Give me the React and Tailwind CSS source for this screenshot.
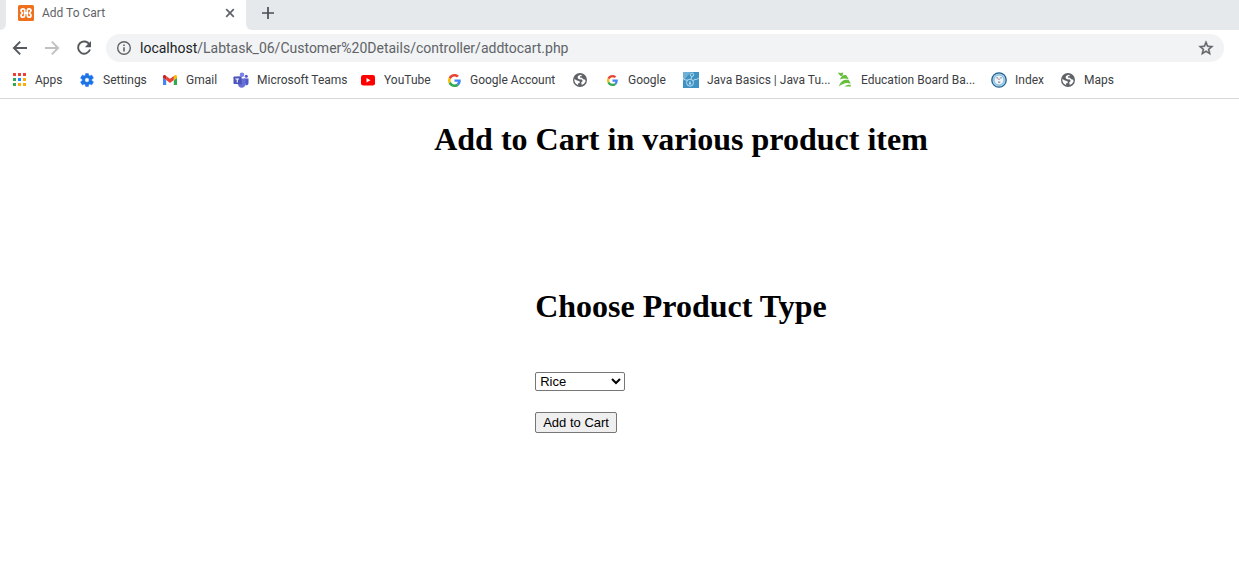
import React from 'react';

const GlobeIcon = () => (
  <svg viewBox="0 0 16 16" className="size-4" aria-hidden="true">
    <circle cx="8" cy="8" r="7" fill="#5f6368" />
    <path d="M8.600 2.700 6 4.100 5.600 6 7 7.200l2.800.3.900 1.600-1.500 1.400.5 2.400 2.300-1.100 1.500-2.300-.2-1.800-2-.4-1.400-1.600-2-.3.200-1.200 2.300-.3z" fill="#fff" />
    <path d="M2.400 6.900 5 8.400l2.500.9.300 1.700-1.900.6.300 1.600-2.600-1.600L2.400 9z" fill="#fff" />
  </svg>
);

const GoogleIcon = ({ className = 'size-[13px]' }) => (
  <svg viewBox="0 0 48 48" className={className} aria-hidden="true">
    <path fill="#EA4335" d="M24 9.500c3.500 0 6.700 1.200 9.200 3.600l6.900-6.900C35.900 2.400 30.500 0 24 0 14.600 0 6.500 5.400 2.600 13.200l8 6.200C12.400 13.700 17.700 9.500 24 9.500z" />
    <path fill="#4285F4" d="M47 24.500c0-1.600-.2-3.100-.4-4.500H24v9h12.900c-.6 3-2.200 5.500-4.800 7.200l7.700 6C44.400 38 47 31.800 47 24.500z" />
    <path fill="#FBBC05" d="M10.500 28.600c-.5-1.500-.8-3-.8-4.600s.3-3.100.8-4.600l-8-6.200C.9 16.500 0 20.100 0 24s.9 7.500 2.600 10.800z" />
    <path fill="#34A853" d="M24 48c6.500 0 11.900-2.100 15.900-5.800l-7.700-6c-2.200 1.500-4.900 2.300-8.200 2.300-6.300 0-11.600-4.200-13.500-9.900l-8 6.200C6.500 42.600 14.600 48 24 48z" />
  </svg>
);

const AppsIcon = () => (
  <svg viewBox="0 0 16 16" className="size-4" shapeRendering="crispEdges" aria-hidden="true">
    <path fill="#ea4335" d="M2 1h3v3H2zM7 1h3v3H7zM12 1h3v3h-3z" />
    <path fill="#34a853" d="M2 6h3v3H2zM2 11h3v3H2z" />
    <path fill="#1a8cff" d="M7 6h3v3H7z" />
    <path fill="#fbae08" d="M12 6h3v3h-3zM7 11h3v3H7zM12 11h3v3h-3z" />
  </svg>
);

const SettingsIcon = () => (
  <svg viewBox="1 1 22 22" className="size-[14px]" aria-hidden="true">
    <path fill="#1a73e8" d="M19.400 13a7.500 7.500 0 0 0 0-2l2.500-1.700a.5.5 0 0 0 .1-.6l-2.300-4a.5.5 0 0 0-.6-.2l-2.800 1.200a7 7 0 0 0-1.700-1L14.200 2a.5.5 0 0 0-.5-.4h-3.400a.5.5 0 0 0-.5.4l-.4 2.700a7 7 0 0 0-1.700 1L4.900 4.500a.5.5 0 0 0-.6.2l-2.300 4a.5.5 0 0 0 .1.6L4.600 11a7.500 7.500 0 0 0 0 2l-2.500 1.700a.5.5 0 0 0-.1.6l2.300 4a.5.5 0 0 0 .6.2l2.800-1.200a7 7 0 0 0 1.700 1l.4 2.700c0 .2.2.4.5.4h3.400a.5.5 0 0 0 .5-.4l.4-2.700a7 7 0 0 0 1.700-1l2.800 1.200a.5.5 0 0 0 .6-.2l2.300-4a.5.5 0 0 0-.1-.6zM12 15.500a3.500 3.500 0 1 1 0-7 3.500 3.500 0 0 1 0 7z" stroke="#1a73e8" strokeWidth=".8" />
  </svg>
);

const GmailIcon = () => (
  <svg viewBox="52 42 88 66" className="w-[14px]" aria-hidden="true">
    <path fill="#4285f4" d="M58 108h14V74L52 59v43c0 3.300 2.700 6 6 6" />
    <path fill="#34a853" d="M120 108h14c3.300 0 6-2.700 6-6V59l-20 15" />
    <path fill="#fbbc04" d="M120 48v26l20-15v-8c0-7.400-8.500-11.600-14.400-7.200" />
    <path fill="#ea4335" d="M72 74V48l24 18 24-18v26L96 92" />
    <path fill="#c5221f" d="M52 51v8l20 15V48l-5.600-4.200C60.500 39.400 52 43.600 52 51" />
  </svg>
);

const TeamsIcon = () => (
  <svg viewBox="0 0 16 16" className="size-4" aria-hidden="true">
    <circle cx="13.300" cy="4.200" r="1.500" fill="#5059c9" />
    <path d="M11 6.500h4.500v4.300c0 2-1.500 2.800-3 2.500z" fill="#5059c9" />
    <circle cx="9" cy="2.700" r="2.300" fill="#7b83eb" />
    <path d="M5 6.500h7.500v5c0 2.600-1.600 4.300-3.800 4.300S5 14.200 5 11.500z" fill="#6870d8" />
    <path d="M4.500 4.500H9v8H4.500z" fill="#4049a8" opacity=".55" />
    <rect x="0.500" y="4.500" width="7.500" height="7.500" rx=".7" fill="#4b53bc" />
    <path d="M2.400 6.400h3.700v1.100H4.800v3.100H3.700V7.500H2.400z" fill="#fff" />
  </svg>
);

const YouTubeIcon = () => (
  <svg viewBox="0 0 16 16" className="size-4" aria-hidden="true">
    <rect x="1" y="3" width="14" height="10.500" rx="2.200" fill="#f00" />
    <path d="M6.500 6v4.500l4-2.250z" fill="#fff" />
  </svg>
);

const JavaIcon = () => (
  <svg viewBox="0 0 16 16" className="size-4" aria-hidden="true">
    <path fill="#3f93c4" d="M0 0h16v16H0z" />
    <path fill="#6fb0d4" d="M0 0h8L0 9z" />
    <g fill="none" stroke="#c3e1f0" strokeWidth=".9">
      <circle cx="9" cy="2.700" r="1.700" />
      <circle cx="7" cy="10.700" r="3.500" />
      <path d="M9 4.500 8 7M0 6l2 2h2.500M10 8.500l2-1h1.500L16 6" />
    </g>
    <path d="M7 8.600 8.300 12.400H5.700z" fill="#c3e1f0" />
  </svg>
);

const EducationIcon = () => (
  <svg viewBox="0 0 16 16" className="size-4" fill="#67bd3c" aria-hidden="true">
    <path d="M1 .5c2 .6 3.500.4 5.300.1L5.300 4.300C3.300 4.500 2 2.500 1 .5z" />
    <path d="M2.800 7.500C4.500 3.500 7.300 2.600 9.300 3.300l2.500 4C8.500 6 5.500 6.200 2.800 7.500z" />
    <path d="M2 14.500c1.500-6 6-7.300 9.800-6.500l2 3.700C9.500 10.300 5.500 11.500 2 14.500z" />
    <path d="M7.500 14.500c2-1.800 4-2 6-1.700l.5 1.700z" />
  </svg>
);

const IndexIcon = () => (
  <svg viewBox="0 0 16 16" className="size-4" aria-hidden="true">
    <circle cx="8" cy="8" r="7.200" fill="#a9d3ec" stroke="#27618f" strokeWidth="1.300" />
    <circle cx="8" cy="8" r="5" fill="#eef4f5" stroke="#7db9df" strokeWidth="1" />
    <path d="M5.500 5.200h1.300v1.200H5.500zM9.400 5.200h1.200v1.200H9.400z" fill="#5a7894" />
    <path d="M7.400 6.500h1.200V8H7.400z" fill="#b57583" />
    <path d="M7 9.600h2.200v1.200H7z" fill="#7d8790" />
  </svg>
);

const bookmarks = [
  { label: 'Apps', Icon: AppsIcon, width: 'w-[68px]' },
  { label: 'Settings', Icon: SettingsIcon, width: 'w-[83px]' },
  { label: 'Gmail', Icon: GmailIcon, width: 'w-[71px]' },
  { label: 'Microsoft Teams', Icon: TeamsIcon, width: 'w-[127px]' },
  { label: 'YouTube', Icon: YouTubeIcon, width: 'w-[86px]' },
  { label: 'Google Account', Icon: GoogleIcon, width: 'w-[126px]' },
  { label: '', name: 'Website', Icon: GlobeIcon, width: 'w-8' },
  { label: 'Google', Icon: () => <GoogleIcon className="size-[11px]" />, width: 'w-[79px]' },
  { label: 'Java Basics | Java Tu...', Icon: JavaIcon, width: 'w-[154px]' },
  { label: 'Education Board Ba...', Icon: EducationIcon, width: 'w-[154px]' },
  { label: 'Index', Icon: IndexIcon, width: 'w-[69px]' },
  { label: 'Maps', Icon: GlobeIcon, width: 'w-[69px]' },
];

function TabStrip() {
  return (
    <div className="flex h-[30px] items-stretch bg-[#e5e9ec]">
      <div className="w-1.5 bg-white">
        <div className="h-full rounded-br-md bg-[#e5e9ec]" />
      </div>
      <div className="flex w-60 items-center bg-white pr-2 pb-1 pl-3">
        <svg viewBox="0 0 16 16" className="size-4 shrink-0" aria-hidden="true">
          <rect width="16" height="16" rx="1.500" fill="#ee6f1c" />
          <g fill="none" stroke="#fff" strokeWidth="1.700" strokeLinejoin="round">
            <path d="M6.700 7V5.300C6.700 4.200 6 3.800 5 3.800S3 4.500 3 5.600 3.800 7.200 4.700 8C3.800 8.800 3 9.300 3 10.400s1 1.800 2 1.800 1.700-.4 1.700-1.500V9" />
            <path d="M9.300 7V5.300c0-1.100.7-1.500 1.700-1.500s2 .7 2 1.800-.8 1.600-1.700 2.400c.9.800 1.700 1.300 1.700 2.400s-1 1.800-2 1.800-1.700-.4-1.700-1.500V9" />
            <path d="M6 8h4" strokeWidth="2" />
          </g>
        </svg>
        <span className="ml-2 flex-1 text-xs text-[#5f6368]">Add To Cart</span>
        <button type="button" aria-label="Close tab" className="grid size-4 place-items-center">
          <svg viewBox="0 0 10 10" className="size-[10px]" aria-hidden="true">
            <path d="m1.200 1.200 7.600 7.600M8.800 1.200 1.200 8.800" stroke="#5f6368" strokeWidth="1.700" />
          </svg>
        </button>
      </div>
      <div className="flex flex-1 bg-white">
        <div className="flex flex-1 items-center rounded-bl-md bg-[#e5e9ec] pb-1 pl-[14px]">
          <button type="button" aria-label="New tab" className="grid size-4 place-items-center">
            <svg viewBox="0 0 12 12" className="size-3" aria-hidden="true">
              <path d="M6 0v12M0 6h12" stroke="#4a4e52" strokeWidth="1.700" />
            </svg>
          </button>
        </div>
      </div>
    </div>
  );
}

function Toolbar() {
  return (
    <div className="flex h-9 items-center gap-[14px] pr-[15px] pl-3">
      <div className="flex gap-4">
        <button type="button" aria-label="Back">
          <svg viewBox="0 0 16 16" className="size-4" aria-hidden="true">
            <path d="M15 8H2.200M8.200 1.700 1.900 8l6.300 6.300" fill="none" stroke="#55595d" strokeWidth="1.900" />
          </svg>
        </button>
        <button type="button" aria-label="Forward">
          <svg viewBox="0 0 16 16" className="size-4" aria-hidden="true">
            <path d="M1 8h12.800M7.800 1.700 14.100 8l-6.300 6.300" fill="none" stroke="#bfc1c3" strokeWidth="1.900" />
          </svg>
        </button>
        <button type="button" aria-label="Reload">
          <svg viewBox="0 0 16 16" className="size-4" aria-hidden="true">
            <path d="M13.600 4.700A6.100 6.100 0 1 0 14 9.500" fill="none" stroke="#55595d" strokeWidth="1.900" />
            <path d="M15 1v6.200H8.800z" fill="#55595d" />
          </svg>
        </button>
      </div>
      <div className="flex h-7 flex-1 items-center rounded-full bg-[#f1f3f4] px-2.5">
        <svg viewBox="0 0 16 16" className="size-4 shrink-0" aria-hidden="true">
          <circle cx="8" cy="8" r="6.300" fill="none" stroke="#5f6368" strokeWidth="1.400" />
          <path d="M7.200 7.200h1.600v4.300H7.200zM7.200 4.500h1.600V6H7.200z" fill="#5f6368" />
        </svg>
        <p className="ml-2 flex-1 truncate text-sm text-[#5f6368]">
          <span className="text-[#202124]">localhost</span>
          /Labtask_06/Customer%20Details/controller/addtocart.php
        </p>
        <button type="button" aria-label="Bookmark this page">
          <svg viewBox="0 0 24 24" className="size-4" fill="#5f6368" stroke="#5f6368" strokeWidth=".6" aria-hidden="true">
            <path fillRule="evenodd" d="m23 9.200-7.900-.7L12 1.200 8.900 8.500 1 9.200l6 5.200-1.800 7.800L12 18l6.800 4.200-1.800-7.800zM12 15.900l-4 2.400 1.100-4.600-3.600-3.100 4.700-.4L12 5.900l1.800 4.300 4.700.4-3.600 3.100 1.100 4.600z" />
          </svg>
        </button>
      </div>
    </div>
  );
}

function BookmarksBar() {
  return (
    <nav aria-label="Bookmarks" className="flex h-[33px] items-center overflow-hidden border-b border-[#d5d7d9] pb-1 pl-[11px]">
      {bookmarks.map(({ label, name, Icon, width }) => (
        <a key={label || name} href="#" aria-label={label || name} className={`flex shrink-0 items-center gap-2 ${width}`}>
          <span className="grid size-4 shrink-0 place-items-center">
            <Icon />
          </span>
          {label && <span className="text-xs whitespace-nowrap text-[#3c4043]">{label}</span>}
        </a>
      ))}
    </nav>
  );
}

export default function App() {
  return (
    <div className="min-h-screen bg-white">
      <header className="font-['Roboto',sans-serif]">
        <TabStrip />
        <Toolbar />
        <BookmarksBar />
      </header>
      <main className="flex flex-col items-center pt-[22px] pl-[123px] text-black">
        <h1 className="font-['Liberation_Serif',serif] text-[32px] leading-9 font-bold">
          Add to Cart in various product item
        </h1>
        <form className="mt-[131px] flex flex-col items-start" onSubmit={(e) => e.preventDefault()}>
          <label htmlFor="product" className="font-['Liberation_Serif',serif] text-[32px] leading-9 font-bold">
            Choose Product Type
          </label>
          <select
            id="product"
            className="mt-12 h-[19px] w-[90px] appearance-auto rounded-[2px] border border-[#767676] bg-white font-['Liberation_Sans',sans-serif] text-[13px] leading-4"
          >
            <option>Rice</option>
          </select>
          <button
            type="submit"
            className="mt-[21px] h-[21px] rounded-[2px] border border-[#767676] bg-[#efefef] px-[7px] font-['Liberation_Sans',sans-serif] text-[13px] leading-4"
          >
            Add to Cart
          </button>
        </form>
      </main>
    </div>
  );
}
